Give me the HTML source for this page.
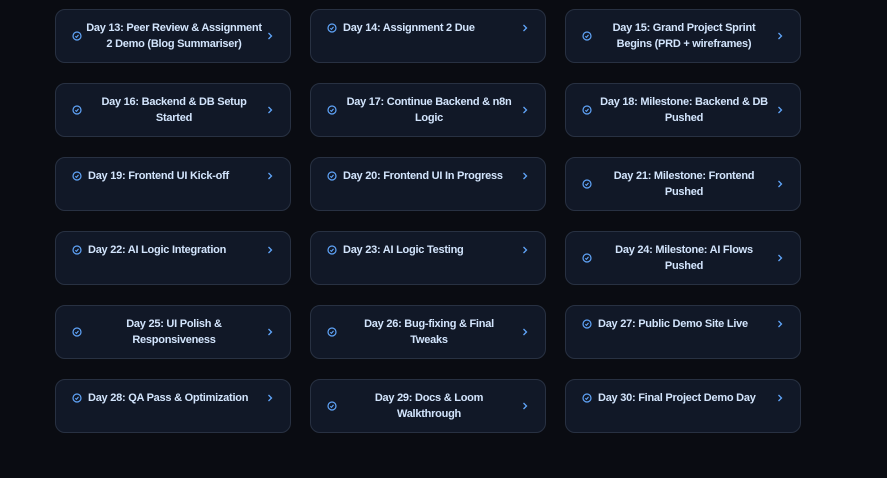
<!DOCTYPE html>
<html><head><style>
html,body{margin:0;padding:0;background:#0a0c12;width:887px;height:478px;overflow:hidden}
.g{position:absolute;left:55px;top:9px;display:grid;grid-template-columns:236px 236px 236px;column-gap:19px;row-gap:20px}
.c{box-sizing:border-box;height:54px;background:#111827;border:1px solid #283142;border-radius:10px;padding:0 16px;display:flex;justify-content:space-between;align-items:center}
.c.s{align-items:flex-start;padding-top:10px}
.t{font-family:"Liberation Sans",sans-serif;font-weight:bold;font-size:11px;letter-spacing:-0.25px;line-height:16px;color:#d2e4fc;text-align:center;flex:0 1 auto;padding:0 4px;white-space:nowrap}
.c.s .t{text-align:left;flex:1;padding-left:6px}
svg{flex:0 0 auto}
.c.s svg{margin-top:3px}
</style></head><body>
<div class="g">
<div class="c"><svg width="10" height="10" viewBox="0 0 10 10"><circle cx="5" cy="5" r="4" fill="none" stroke="#60a5fa" stroke-width="1.2"/><path d="M3.3 5.3l1.2 1 2-2.4" fill="none" stroke="#60a5fa" stroke-width="1.1"/></svg><div class="t">Day 13: Peer Review &amp; Assignment<br>2 Demo (Blog Summariser)</div><svg width="8" height="10" viewBox="0 0 8 10"><path d="M2.5 2l3 3-3 3" fill="none" stroke="#60a5fa" stroke-width="1.3"/></svg></div>
<div class="c s"><svg width="10" height="10" viewBox="0 0 10 10"><circle cx="5" cy="5" r="4" fill="none" stroke="#60a5fa" stroke-width="1.2"/><path d="M3.3 5.3l1.2 1 2-2.4" fill="none" stroke="#60a5fa" stroke-width="1.1"/></svg><div class="t">Day 14: Assignment 2 Due</div><svg width="8" height="10" viewBox="0 0 8 10"><path d="M2.5 2l3 3-3 3" fill="none" stroke="#60a5fa" stroke-width="1.3"/></svg></div>
<div class="c"><svg width="10" height="10" viewBox="0 0 10 10"><circle cx="5" cy="5" r="4" fill="none" stroke="#60a5fa" stroke-width="1.2"/><path d="M3.3 5.3l1.2 1 2-2.4" fill="none" stroke="#60a5fa" stroke-width="1.1"/></svg><div class="t">Day 15: Grand Project Sprint<br>Begins (PRD + wireframes)</div><svg width="8" height="10" viewBox="0 0 8 10"><path d="M2.5 2l3 3-3 3" fill="none" stroke="#60a5fa" stroke-width="1.3"/></svg></div>

<div class="c"><svg width="10" height="10" viewBox="0 0 10 10"><circle cx="5" cy="5" r="4" fill="none" stroke="#60a5fa" stroke-width="1.2"/><path d="M3.3 5.3l1.2 1 2-2.4" fill="none" stroke="#60a5fa" stroke-width="1.1"/></svg><div class="t">Day 16: Backend &amp; DB Setup<br>Started</div><svg width="8" height="10" viewBox="0 0 8 10"><path d="M2.5 2l3 3-3 3" fill="none" stroke="#60a5fa" stroke-width="1.3"/></svg></div>
<div class="c"><svg width="10" height="10" viewBox="0 0 10 10"><circle cx="5" cy="5" r="4" fill="none" stroke="#60a5fa" stroke-width="1.2"/><path d="M3.3 5.3l1.2 1 2-2.4" fill="none" stroke="#60a5fa" stroke-width="1.1"/></svg><div class="t">Day 17: Continue Backend &amp; n8n<br>Logic</div><svg width="8" height="10" viewBox="0 0 8 10"><path d="M2.5 2l3 3-3 3" fill="none" stroke="#60a5fa" stroke-width="1.3"/></svg></div>
<div class="c"><svg width="10" height="10" viewBox="0 0 10 10"><circle cx="5" cy="5" r="4" fill="none" stroke="#60a5fa" stroke-width="1.2"/><path d="M3.3 5.3l1.2 1 2-2.4" fill="none" stroke="#60a5fa" stroke-width="1.1"/></svg><div class="t">Day 18: Milestone: Backend &amp; DB<br>Pushed</div><svg width="8" height="10" viewBox="0 0 8 10"><path d="M2.5 2l3 3-3 3" fill="none" stroke="#60a5fa" stroke-width="1.3"/></svg></div>

<div class="c s"><svg width="10" height="10" viewBox="0 0 10 10"><circle cx="5" cy="5" r="4" fill="none" stroke="#60a5fa" stroke-width="1.2"/><path d="M3.3 5.3l1.2 1 2-2.4" fill="none" stroke="#60a5fa" stroke-width="1.1"/></svg><div class="t">Day 19: Frontend UI Kick-off</div><svg width="8" height="10" viewBox="0 0 8 10"><path d="M2.5 2l3 3-3 3" fill="none" stroke="#60a5fa" stroke-width="1.3"/></svg></div>
<div class="c s"><svg width="10" height="10" viewBox="0 0 10 10"><circle cx="5" cy="5" r="4" fill="none" stroke="#60a5fa" stroke-width="1.2"/><path d="M3.3 5.3l1.2 1 2-2.4" fill="none" stroke="#60a5fa" stroke-width="1.1"/></svg><div class="t">Day 20: Frontend UI In Progress</div><svg width="8" height="10" viewBox="0 0 8 10"><path d="M2.5 2l3 3-3 3" fill="none" stroke="#60a5fa" stroke-width="1.3"/></svg></div>
<div class="c"><svg width="10" height="10" viewBox="0 0 10 10"><circle cx="5" cy="5" r="4" fill="none" stroke="#60a5fa" stroke-width="1.2"/><path d="M3.3 5.3l1.2 1 2-2.4" fill="none" stroke="#60a5fa" stroke-width="1.1"/></svg><div class="t">Day 21: Milestone: Frontend<br>Pushed</div><svg width="8" height="10" viewBox="0 0 8 10"><path d="M2.5 2l3 3-3 3" fill="none" stroke="#60a5fa" stroke-width="1.3"/></svg></div>

<div class="c s"><svg width="10" height="10" viewBox="0 0 10 10"><circle cx="5" cy="5" r="4" fill="none" stroke="#60a5fa" stroke-width="1.2"/><path d="M3.3 5.3l1.2 1 2-2.4" fill="none" stroke="#60a5fa" stroke-width="1.1"/></svg><div class="t">Day 22: AI Logic Integration</div><svg width="8" height="10" viewBox="0 0 8 10"><path d="M2.5 2l3 3-3 3" fill="none" stroke="#60a5fa" stroke-width="1.3"/></svg></div>
<div class="c s"><svg width="10" height="10" viewBox="0 0 10 10"><circle cx="5" cy="5" r="4" fill="none" stroke="#60a5fa" stroke-width="1.2"/><path d="M3.3 5.3l1.2 1 2-2.4" fill="none" stroke="#60a5fa" stroke-width="1.1"/></svg><div class="t">Day 23: AI Logic Testing</div><svg width="8" height="10" viewBox="0 0 8 10"><path d="M2.5 2l3 3-3 3" fill="none" stroke="#60a5fa" stroke-width="1.3"/></svg></div>
<div class="c"><svg width="10" height="10" viewBox="0 0 10 10"><circle cx="5" cy="5" r="4" fill="none" stroke="#60a5fa" stroke-width="1.2"/><path d="M3.3 5.3l1.2 1 2-2.4" fill="none" stroke="#60a5fa" stroke-width="1.1"/></svg><div class="t">Day 24: Milestone: AI Flows<br>Pushed</div><svg width="8" height="10" viewBox="0 0 8 10"><path d="M2.5 2l3 3-3 3" fill="none" stroke="#60a5fa" stroke-width="1.3"/></svg></div>

<div class="c"><svg width="10" height="10" viewBox="0 0 10 10"><circle cx="5" cy="5" r="4" fill="none" stroke="#60a5fa" stroke-width="1.2"/><path d="M3.3 5.3l1.2 1 2-2.4" fill="none" stroke="#60a5fa" stroke-width="1.1"/></svg><div class="t">Day 25: UI Polish &amp;<br>Responsiveness</div><svg width="8" height="10" viewBox="0 0 8 10"><path d="M2.5 2l3 3-3 3" fill="none" stroke="#60a5fa" stroke-width="1.3"/></svg></div>
<div class="c"><svg width="10" height="10" viewBox="0 0 10 10"><circle cx="5" cy="5" r="4" fill="none" stroke="#60a5fa" stroke-width="1.2"/><path d="M3.3 5.3l1.2 1 2-2.4" fill="none" stroke="#60a5fa" stroke-width="1.1"/></svg><div class="t">Day 26: Bug-fixing &amp; Final<br>Tweaks</div><svg width="8" height="10" viewBox="0 0 8 10"><path d="M2.5 2l3 3-3 3" fill="none" stroke="#60a5fa" stroke-width="1.3"/></svg></div>
<div class="c s"><svg width="10" height="10" viewBox="0 0 10 10"><circle cx="5" cy="5" r="4" fill="none" stroke="#60a5fa" stroke-width="1.2"/><path d="M3.3 5.3l1.2 1 2-2.4" fill="none" stroke="#60a5fa" stroke-width="1.1"/></svg><div class="t">Day 27: Public Demo Site Live</div><svg width="8" height="10" viewBox="0 0 8 10"><path d="M2.5 2l3 3-3 3" fill="none" stroke="#60a5fa" stroke-width="1.3"/></svg></div>

<div class="c s"><svg width="10" height="10" viewBox="0 0 10 10"><circle cx="5" cy="5" r="4" fill="none" stroke="#60a5fa" stroke-width="1.2"/><path d="M3.3 5.3l1.2 1 2-2.4" fill="none" stroke="#60a5fa" stroke-width="1.1"/></svg><div class="t">Day 28: QA Pass &amp; Optimization</div><svg width="8" height="10" viewBox="0 0 8 10"><path d="M2.5 2l3 3-3 3" fill="none" stroke="#60a5fa" stroke-width="1.3"/></svg></div>
<div class="c"><svg width="10" height="10" viewBox="0 0 10 10"><circle cx="5" cy="5" r="4" fill="none" stroke="#60a5fa" stroke-width="1.2"/><path d="M3.3 5.3l1.2 1 2-2.4" fill="none" stroke="#60a5fa" stroke-width="1.1"/></svg><div class="t">Day 29: Docs &amp; Loom<br>Walkthrough</div><svg width="8" height="10" viewBox="0 0 8 10"><path d="M2.5 2l3 3-3 3" fill="none" stroke="#60a5fa" stroke-width="1.3"/></svg></div>
<div class="c s"><svg width="10" height="10" viewBox="0 0 10 10"><circle cx="5" cy="5" r="4" fill="none" stroke="#60a5fa" stroke-width="1.2"/><path d="M3.3 5.3l1.2 1 2-2.4" fill="none" stroke="#60a5fa" stroke-width="1.1"/></svg><div class="t">Day 30: Final Project Demo Day</div><svg width="8" height="10" viewBox="0 0 8 10"><path d="M2.5 2l3 3-3 3" fill="none" stroke="#60a5fa" stroke-width="1.3"/></svg></div>
</div>
</body></html>
